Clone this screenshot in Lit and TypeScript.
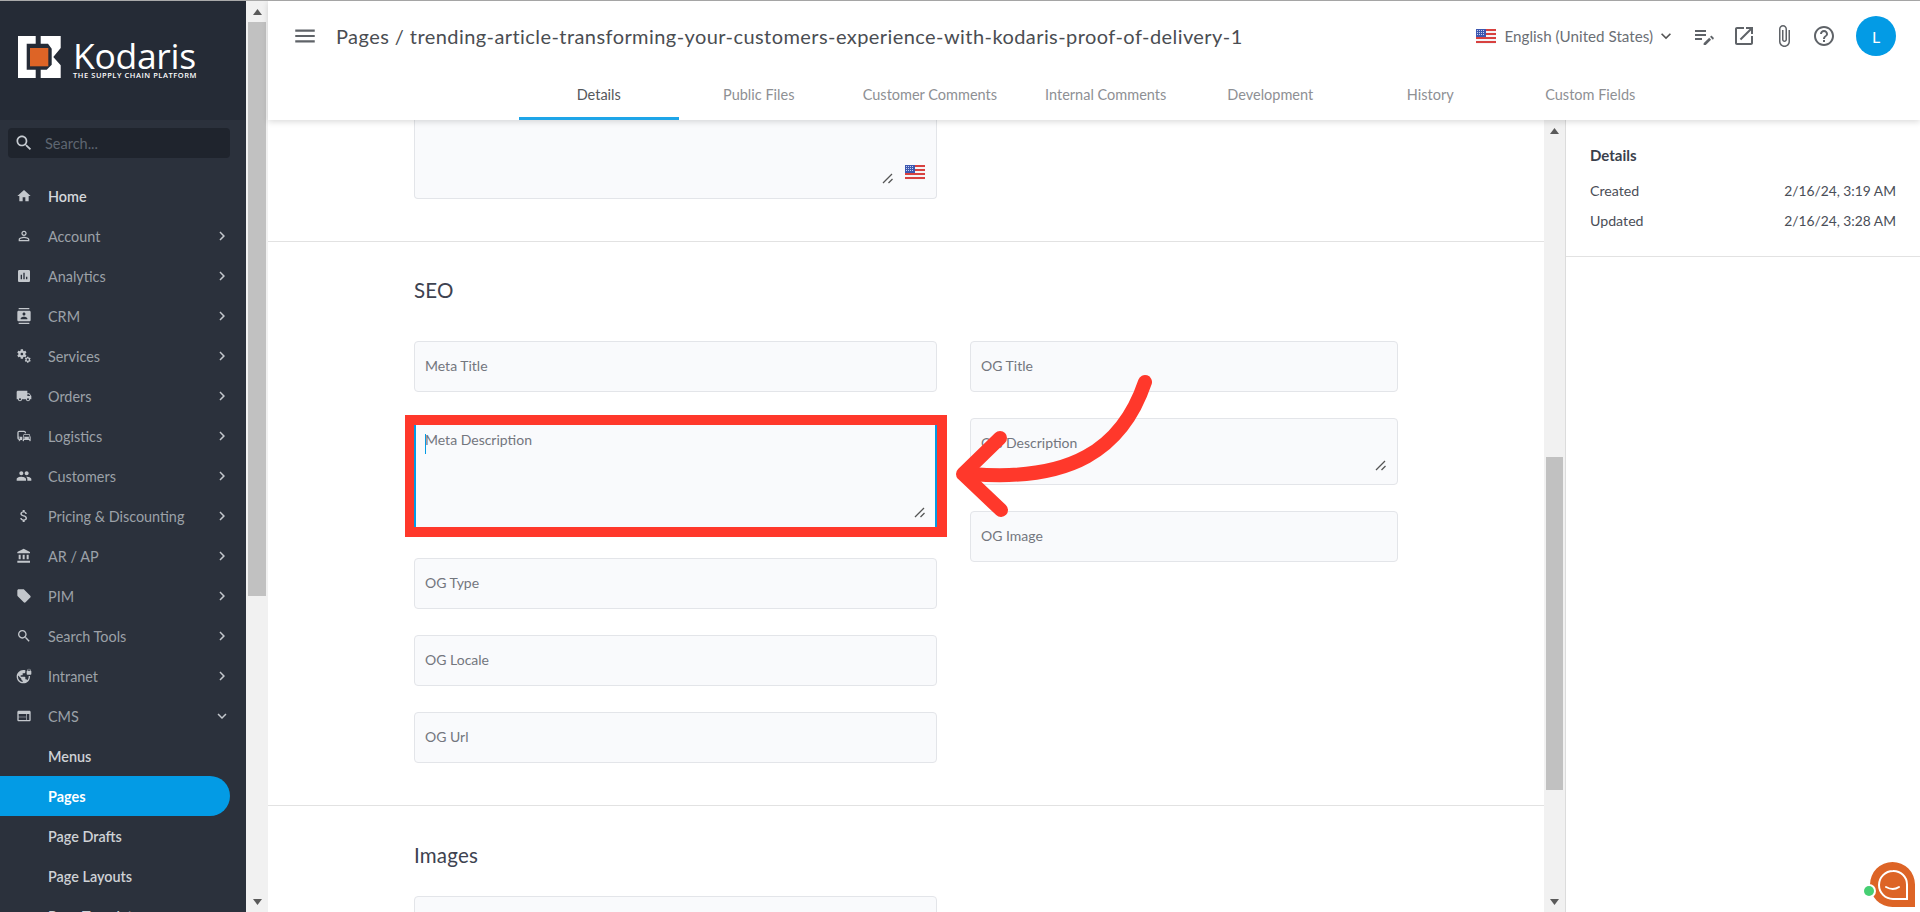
import { LitElement, html, css } from "lit";
import { customElement } from "lit/decorators.js";

const P = {
  home: "M10 20v-6h4v6h5v-8h3L12 3 2 12h3v8z",
  person: "M12 5.9c1.16 0 2.1.94 2.1 2.1s-.94 2.1-2.1 2.1S9.9 9.16 9.9 8s.94-2.1 2.1-2.1m0 9c2.97 0 6.1 1.46 6.1 2.1v1.1H5.9V17c0-.64 3.13-2.1 6.1-2.1M12 4C9.79 4 8 5.79 8 8s1.79 4 4 4 4-1.79 4-4-1.79-4-4-4zm0 9c-2.67 0-8 1.34-8 4v3h16v-3c0-2.66-5.33-4-8-4z",
  analytics: "M19 3H5c-1.1 0-2 .9-2 2v14c0 1.1.9 2 2 2h14c1.1 0 2-.9 2-2V5c0-1.1-.9-2-2-2zM9 17H7v-7h2v7zm4 0h-2V7h2v10zm4 0h-2v-4h2v4z",
  contacts: "M20 0H4v2h16V0zM4 24h16v-2H4v2zM20 4H4c-1.1 0-2 .9-2 2v12c0 1.1.9 2 2 2h16c1.1 0 2-.9 2-2V6c0-1.1-.9-2-2-2zm-8 2.75c1.24 0 2.25 1.01 2.25 2.25s-1.01 2.25-2.25 2.25S9.75 10.24 9.75 9 10.76 6.75 12 6.75zM17 17H7v-1.5c0-1.67 3.33-2.5 5-2.5s5 .83 5 2.5V17z",
  services: "M14.17 13.71l1.4-2.42c.09-.15.05-.34-.08-.45l-1.48-1.16c.03-.22.05-.45.05-.68s-.02-.46-.05-.69l1.48-1.16c.13-.11.17-.3.08-.45l-1.4-2.42c-.09-.15-.27-.21-.43-.15l-1.74.7c-.36-.28-.75-.51-1.18-.69l-.26-1.85C10.53 2.13 10.38 2 10.2 2H7.4c-.18 0-.33.13-.35.3l-.26 1.85c-.43.18-.82.41-1.18.69l-1.74-.7c-.16-.06-.34 0-.43.15l-1.4 2.42c-.09.15-.05.34.08.45l1.48 1.16c-.03.23-.05.46-.05.69 0 .23.02.46.05.69l-1.48 1.16c-.13.11-.17.3-.08.45l1.4 2.42c.09.15.27.21.43.15l1.74-.7c.36.28.75.51 1.18.69l.26 1.85c.02.17.17.3.35.3h2.8c.18 0 .33-.13.35-.3l.26-1.85c.43-.18.82-.41 1.18-.69l1.74.7c.16.06.34 0 .43-.15zM8.8 11c-1.1 0-2-.9-2-2s.9-2 2-2 2 .9 2 2-.9 2-2 2zM21.92 18.67l-.96-.74c.02-.14.04-.29.04-.44s-.01-.3-.04-.44l.95-.74c.08-.07.11-.19.05-.29l-.9-1.55c-.05-.1-.17-.13-.28-.1l-1.11.45c-.23-.18-.48-.33-.76-.44l-.17-1.18c-.01-.12-.11-.2-.21-.2h-1.79c-.11 0-.21.08-.22.19l-.17 1.18c-.27.12-.53.26-.76.44l-1.11-.45c-.1-.04-.22 0-.28.1l-.9 1.55c-.05.1-.04.22.05.29l.95.74c-.02.14-.03.29-.03.44s.01.3.03.44l-.95.74c-.08.07-.11.19-.05.29l.9 1.55c.05.1.17.13.28.1l1.11-.45c.23.18.48.33.76.44l.17 1.18c.02.11.11.19.22.19h1.79c.11 0 .21-.08.22-.19l.17-1.18c.27-.12.53-.26.75-.44l1.12.45c.1.04.22 0 .28-.1l.9-1.55c.06-.09.03-.21-.05-.28zm-4.29.4c-.88 0-1.58-.71-1.58-1.58s.71-1.58 1.58-1.58 1.58.71 1.58 1.58-.7 1.58-1.58 1.58z",
  truck: "M20 8h-3V4H3c-1.1 0-2 .9-2 2v11h2c0 1.66 1.34 3 3 3s3-1.34 3-3h6c0 1.66 1.34 3 3 3s3-1.34 3-3h2v-5l-3-4zM6 18.5c-.83 0-1.5-.67-1.5-1.5s.67-1.5 1.5-1.5 1.5.67 1.5 1.5-.67 1.5-1.5 1.5zm13.5-9l1.96 2.5H17V9.5h2.5zm-1.5 9c-.83 0-1.5-.67-1.5-1.5s.67-1.5 1.5-1.5 1.5.67 1.5 1.5-.67 1.5-1.5 1.5z",
  commute: "M12 4H5C3.34 4 2 5.34 2 7v8c0 1.66 1.34 3 3 3l-1 1v1h1l2-2.03L9 18v-5H4V5.98L13 6v2h2V7c0-1.66-1.34-3-3-3zM5 14c.55 0 1 .45 1 1s-.45 1-1 1-1-.45-1-1 .45-1 1-1zm15.57-4.34c-.14-.4-.52-.66-.97-.66h-7.19c-.46 0-.83.26-.98.66L10 13.77l.01 5.51c0 .38.31.72.69.72h.62c.38 0 .68-.38.68-.76V18h8v1.24c0 .38.31.76.69.76h.61c.38 0 .69-.34.69-.72l.01-1.37v-4.14l-1.43-4.11zm-8.16.34h7.19l1.03 3h-9.25l1.03-3zM12 16c-.55 0-1-.45-1-1s.45-1 1-1 1 .45 1 1-.45 1-1 1zm8 0c-.55 0-1-.45-1-1s.45-1 1-1 1 .45 1 1-.45 1-1 1z",
  people: "M16 11c1.66 0 2.99-1.34 2.99-3S17.66 5 16 5c-1.66 0-3 1.34-3 3s1.34 3 3 3zm-8 0c1.66 0 2.99-1.34 2.99-3S9.66 5 8 5C6.34 5 5 6.34 5 8s1.34 3 3 3zm0 2c-2.33 0-7 1.17-7 3.5V19h14v-2.5c0-2.33-4.67-3.5-7-3.5zm8 0c-.29 0-.62.02-.97.05 1.16.84 1.97 1.97 1.97 3.45V19h6v-2.5c0-2.33-4.67-3.5-7-3.5z",
  money: "M11.8 10.9c-2.27-.59-3-1.2-3-2.15 0-1.09 1.01-1.85 2.7-1.85 1.78 0 2.44.85 2.5 2.1h2.21c-.07-1.72-1.12-3.3-3.21-3.81V3h-3v2.16c-1.94.42-3.5 1.68-3.5 3.61 0 2.31 1.91 3.46 4.7 4.13 2.5.6 3 1.48 3 2.41 0 .69-.49 1.79-2.7 1.79-2.06 0-2.87-.92-2.98-2.1h-2.2c.12 2.19 1.76 3.42 3.68 3.83V21h3v-2.15c1.95-.37 3.5-1.5 3.5-3.55 0-2.84-2.43-3.81-4.7-4.4z",
  bank: "M4 10v7h3v-7H4zm6 0v7h3v-7h-3zM2 22h19v-3H2v3zm14-12v7h3v-7h-3zm-4.5-9L2 6v2h19V6l-9.5-5z",
  tag: "M21.41 11.58l-9-9C12.05 2.22 11.55 2 11 2H4c-1.1 0-2 .9-2 2v7c0 .55.22 1.05.59 1.42l9 9c.36.36.86.58 1.41.58.55 0 1.05-.22 1.41-.59l7-7c.37-.36.59-.86.59-1.41 0-.55-.23-1.06-.59-1.42z",
  search: "M15.5 14h-.79l-.28-.27C15.41 12.59 16 11.11 16 9.5 16 5.91 13.09 3 9.5 3S3 5.91 3 9.5 5.91 16 9.5 16c1.61 0 3.09-.59 4.23-1.57l.27.28v.79l5 4.99L20.49 19l-4.99-5zm-6 0C7.01 14 5 11.99 5 9.5S7.01 5 9.5 5 14 7.01 14 9.5 11.99 14 9.5 14z",
  vpn: "M22 4v-.5C22 2.12 20.88 1 19.5 1S17 2.12 17 3.5V4c-.55 0-1 .45-1 1v4c0 .55.45 1 1 1h5c.55 0 1-.45 1-1V5c0-.55-.45-1-1-1zm-.8 0h-3.4v-.5c0-.94.76-1.7 1.7-1.7s1.7.76 1.7 1.7V4zm-2.28 8c.04.33.08.66.08 1 0 2.08-.8 3.97-2.1 5.39-.26-.81-1-1.39-1.9-1.39h-1v-3c0-.55-.45-1-1-1H7v-2h2c.55 0 1-.45 1-1V8h2c1.1 0 2-.9 2-2V3.46c-.95-.3-1.95-.46-3-.46C5.48 3 1 7.48 1 13s4.48 10 10 10 10-4.48 10-10c0-.34-.02-.67-.05-1h-2.03zM10 20.93c-3.95-.49-7-3.85-7-7.93 0-.62.08-1.21.21-1.79L8 16v1c0 1.1.9 2 2 2v1.93z",
  web: "M20 4H4c-1.1 0-1.99.9-1.99 2L2 18c0 1.1.9 2 2 2h16c1.1 0 2-.9 2-2V6c0-1.1-.9-2-2-2zm-5 14H4v-4h11v4zm0-5H4V9h11v4zm5 5h-4V9h4v9z",
  right: "M10 6L8.59 7.41 13.17 12l-4.58 4.59L10 18l6-6z",
  down: "M16.59 8.59L12 13.17 7.41 8.59 6 10l6 6 6-6z",
  menu: "M3 18h18v-2H3v2zm0-5h18v-2H3v2zm0-7v2h18V6H3z",
  editNote: "M3 10h11v2H3v-2zm0-2h11V6H3v2zm0 8h7v-2H3v2zm15.01-3.13.71-.71c.39-.39 1.02-.39 1.41 0l1.41 1.41c.39.39.39 1.02 0 1.41l-.71.71-2.82-2.82zm-1.06 1.06l-5.3 5.3V21h2.12l5.3-5.3-2.12-2.12z",
  open: "M19 19H5V5h7V3H5c-1.11 0-2 .9-2 2v14c0 1.1.89 2 2 2h14c1.1 0 2-.9 2-2v-7h-2v7zM14 3v2h3.59l-9.83 9.83 1.41 1.41L19 6.41V10h2V3h-7z",
  attach: "M16.5 6v11.5c0 2.21-1.79 4-4 4s-4-1.79-4-4V5c0-1.38 1.12-2.5 2.5-2.5s2.5 1.12 2.5 2.5v10.5c0 .55-.45 1-1 1s-1-.45-1-1V6H10v9.5c0 1.38 1.12 2.5 2.5 2.5s2.5-1.12 2.5-2.5V5c0-2.21-1.79-4-4-4S7 2.79 7 5v12.5c0 3.04 2.46 5.5 5.5 5.5s5.5-2.46 5.5-5.5V6h-1.5z",
  help: "M11 18h2v-2h-2v2zm1-16C6.48 2 2 6.48 2 12s4.48 10 10 10 10-4.48 10-10S17.52 2 12 2zm0 18c-4.41 0-8-3.59-8-8s3.59-8 8-8 8 3.59 8 8-3.59 8-8 8zm0-14c-2.21 0-4 1.79-4 4h2c0-1.1.9-2 2-2s2 .9 2 2c0 2-3 1.75-3 5h2c0-2.25 3-2.5 3-5 0-2.21-1.79-4-4-4z",
};

const NAV: [string, string, string][] = [
  ["Home", P.home, "top"],
  ["Account", P.person, "more"],
  ["Analytics", P.analytics, "more"],
  ["CRM", P.contacts, "more"],
  ["Services", P.services, "more"],
  ["Orders", P.truck, "more"],
  ["Logistics", P.commute, "more"],
  ["Customers", P.people, "more"],
  ["Pricing & Discounting", P.money, "more"],
  ["AR / AP", P.bank, "more"],
  ["PIM", P.tag, "more"],
  ["Search Tools", P.search, "more"],
  ["Intranet", P.vpn, "more"],
  ["CMS", P.web, "open"],
];
const SUB = ["Menus", "Pages", "Page Drafts", "Page Layouts", "Page Templates"];
const TABS = ["Details", "Public Files", "Customer Comments", "Internal Comments", "Development", "History", "Custom Fields"];

const icon = (d: string, cls = "") => html`<svg class=${cls} viewBox="0 0 24 24" fill="currentColor"><path d=${d}></path></svg>`;
const flag = () => html`<svg class="flag" viewBox="0 0 20 15">
  <rect width="20" height="15" rx="1" fill="#f4f4f6"></rect>
  <path d="M0 1h20M0 5h20M0 9h20M0 13h20" stroke="#d8413f" stroke-width="2"></path>
  <rect width="10" height="8" fill="#3d58b0"></rect>
  <path d="M1 1.5h8M1 3.5h8M1 5.5h8" stroke="#c6cfee" stroke-width="1" stroke-dasharray="1 1"></path>
</svg>`;
const grip = () => html`<svg class="grip" viewBox="0 0 12 12"><path d="M1 11L10 2M6.5 11L10.500 7" stroke="#555" stroke-width="1.3" fill="none"></path></svg>`;

@customElement("app-root")
export class AppRoot extends LitElement {
  static styles = css`
    :host { display: block; width: 1920px; height: 912px; overflow: hidden; position: relative; font-family: Lato, "Noto Sans", sans-serif; background: #fff; }
    * { box-sizing: border-box; }
    .root { display: flex; height: 912px; border-top: 1px solid #aaa; }
    svg { display: block; flex: none; }

    .side { width: 246px; flex: none; height: 100%; background: #2b313c; overflow: hidden; color: #9ca1a8; }
    .brand { height: 119px; background: #252b36; display: flex; align-items: flex-start; padding: 35px 0 0 18px; gap: 12px; }
    .logo { width: 43px; height: 42px; }
    .word { display: flex; flex-direction: column; color: #fff; padding-top: 4px; }
    .word b { font: 500 35.500px/31px "Open Sans", sans-serif; letter-spacing: -0.3px; }
    .word i { font: 600 7.500px/9px "Open Sans", sans-serif; letter-spacing: 0.55px; white-space: nowrap; font-style: normal; }
    .find { margin: 8px 16px 18px 8px; height: 30px; background: #1f242d; border-radius: 4px; display: flex; align-items: center; padding-left: 6px; gap: 11px; color: #5e6671; font-size: 14.5px; }
    .find svg { width: 20px; height: 20px; color: #c6cbd1; }
    .item { height: 40px; display: flex; align-items: center; font-size: 14.4px; position: relative; padding-left: 16px; }
    .item .ic { width: 16px; height: 16px; color: #c3c7cc; margin-right: 16px; }
    .item .label { flex: 1; }
    .item .chev { width: 18px; height: 18px; margin-right: 15px; color: #c3c7cc; }
    .item.top { color: #d4d7db; font-weight: 600; }
    .sub { height: 40px; display: flex; align-items: center; padding-left: 48px; font-size: 14.4px; font-weight: 600; color: #cfd2d6; margin-right: 16px; }
    .sub.on { background: #039be5; color: #fff; border-radius: 0 20px 20px 0; font-weight: 700; }

    .track { width: 22px; flex: none; height: 100%; background: #f1f1f1; display: flex; flex-direction: column; align-items: center; position: relative; }
    .arrow { height: 21px; flex: none; display: flex; align-items: center; justify-content: center; color: #5a5a5a; }
    .arrow svg { width: 9px; height: 6px; }
    .thumb { background: #c1c1c1; width: 18px; }
    .gap { flex: 1; }
    .t1 { height: 574px; }
    .main { flex: 1; min-width: 0; display: flex; flex-direction: column; height: 100%; }
    .head { height: 119px; flex: none; background: #fff; box-shadow: 0 2px 6px rgba(0,0,0,.14); position: relative; z-index: 2; display: flex; flex-direction: column; }
    .bar { height: 72px; display: flex; align-items: center; padding: 0 24px 2px 24px; color: #5f6368; }
    .bar .burger { width: 26px; height: 26px; margin-right: 18px; color: #5f6368; }
    .title { flex: 1; font-size: 20px; letter-spacing: 0.43px; color: #4a4d52; white-space: nowrap; }
    .lang { display: flex; align-items: center; font-size: 15.2px; color: #6b6f75; margin-right: 16px; }
    .flag { width: 20px; height: 15px; }
    .lang .flag { margin-right: 8px; }
    .lang svg:last-child { width: 20px; height: 20px; margin-left: 3px; color: #555; }
    .tool { width: 24px; height: 24px; margin-right: 16px; color: #5f6368; }
    .avatar { width: 40px; height: 40px; border-radius: 50%; background: #039be5; color: #fff; display: flex; align-items: center; justify-content: center; font-size: 16px; margin-left: 4px; }
    .tabs { height: 47px; display: flex; justify-content: center; margin-left: 1px; }
    .tab { min-width: 160px; padding: 0 24px 2px; display: flex; align-items: center; justify-content: center; font-size: 14.5px; color: #8e9094; border-bottom: 3px solid transparent; }
    .tab.on { color: #55585c; border-bottom-color: #1ea5e8; }

    .body { flex: 1; min-height: 0; display: flex; }
    .content { flex: 1; min-width: 0; overflow: hidden; }
    .sec { padding-left: 146px; border-bottom: 1px solid #e2e2e2; }
    .s0 { height: 122px; }
    .s1 { height: 564px; padding-top: 35px; }
    .s2 { padding-top: 36px; border-bottom: 0; }
    h2 { margin: 0; font-size: 20.5px; font-weight: 400; letter-spacing: 0.2px; color: #3d4250; line-height: 26px; }
    .cols { display: flex; gap: 33px; margin-top: 38px; }
    .col { display: flex; flex-direction: column; gap: 26px; }
    .c1 { width: 523px; }
    .c2 { width: 428px; }
    .field { height: 51px; flex: none; background: #f9fafc; border: 1px solid #e3e5e9; border-radius: 4px; padding: 12px 10px 0; font-size: 14px; line-height: 24px; color: #73767e; position: relative; }
    .field.big { height: 114px; border-color: #039be5; border-width: 1px 2px; padding: 9px 9px 0; }
    .field.mid { height: 67px; padding-top: 12px; }
    .field.t { height: 79px; border-top: 0; border-radius: 0 0 4px 4px; width: 523px; }
    .caret { position: absolute; left: 9px; top: 15px; width: 1px; height: 20px; background: #039be5; }
    .grip { position: absolute; width: 12px; height: 12px; }
    .field.t .grip { right: 42px; bottom: 14px; }
    .field.t .flag { position: absolute; right: 11px; bottom: 18px; }
    .field.big .grip { right: 9px; bottom: 13px; }
    .field.mid .grip { right: 10px; bottom: 13px; }
    .field.tail { margin-top: 28px; }

    .panel { width: 354px; flex: none; }
    .pbox { height: 137px; padding: 23px 24px 0 24px; border-bottom: 1px solid #e2e2e2; font-size: 14.2px; color: #4a4e57; }
    .pbox h3 { margin: 0 0 8px; font-size: 15px; font-weight: 700; color: #3a3f4c; line-height: 24px; }
    .row { display: flex; justify-content: space-between; height: 30px; align-items: center; }
    .row span:last-child { font-size: 13.8px; }
    .mtrack { border-right: 1px solid #dcdcdc; }
    .mgap { height: 316px; flex: none; }
    .t2 { height: 333px; flex: none; width: 17px; }

    .box { position: absolute; left: 405px; top: 415px; width: 542px; height: 122px; border: 10px solid #ff382b; border-left-width: 9px; pointer-events: none; }
    .over { position: absolute; left: 0; top: 0; width: 1920px; height: 912px; pointer-events: none; z-index: 5; }
  `;

  render() {
    const tri = (up: boolean) => html`<div class="arrow"><svg viewBox="0 0 9 6"><path d=${up ? "M4.500 0L9 6H0z" : "M0 0h9L4.500 6z"} fill="currentColor"></path></svg></div>`;
    const L = ["Meta Title", "Meta Description", "OG Type", "OG Locale", "OG Url"];
    return html`
      <div class="root">
        <aside class="side">
          <div class="brand">
            <svg class="logo" viewBox="0 0 43 42">
              <path d="M0 0H17.700V7.700H8.700V33.700H17.700V42H0z" fill="#fff"></path>
              <path d="M22.700 0H42.700V12L35.300 21L42.700 29.300V42H22.700V33.700H28.700L33.700 28.700V12.700L30 7.700H22.700z" fill="#fff"></path>
              <rect x="12" y="12" width="18.300" height="18.300" fill="#dd6426"></rect>
            </svg>
            <div class="word"><b>Kodaris</b><i>THE SUPPLY CHAIN PLATFORM</i></div>
          </div>
          <div class="find">${icon(P.search)}<span>Search...</span></div>
          ${NAV.map(([n, d, k]) => html`<div class="item ${k}">${icon(d, "ic")}<span class="label">${n}</span>${k === "top" ? "" : icon(k === "open" ? P.down : P.right, "chev")}</div>`)}
          ${SUB.map((s) => html`<div class="sub ${s === "Pages" ? "on" : ""}">${s}</div>`)}
        </aside>
        <div class="track">${tri(true)}<div class="thumb t1"></div><div class="gap"></div>${tri(false)}</div>
        <div class="main">
          <header class="head">
            <div class="bar">
              ${icon(P.menu, "burger")}
              <div class="title">Pages / trending-article-transforming-your-customers-experience-with-kodaris-proof-of-delivery-1</div>
              <div class="lang">${flag()}<span>English (United States)</span>${icon(P.down)}</div>
              ${icon(P.editNote, "tool")}${icon(P.open, "tool")}${icon(P.attach, "tool")}${icon(P.help, "tool")}
              <div class="avatar">L</div>
            </div>
            <nav class="tabs">${TABS.map((t, i) => html`<div class="tab ${i === 0 ? "on" : ""}">${t}</div>`)}</nav>
          </header>
          <div class="body">
            <div class="content">
              <section class="sec s0"><div class="field t">${grip()}${flag()}</div></section>
              <section class="sec s1">
                <h2>SEO</h2>
                <div class="cols">
                  <div class="col c1">
                    ${L.map((l) => html`<div class="field ${l === "Meta Description" ? "big" : ""}">${l === "Meta Description" ? html`<span class="caret"></span>${grip()}` : ""}${l}</div>`)}
                  </div>
                  <div class="col c2">
                    <div class="field">OG Title</div>
                    <div class="field mid">OG Description${grip()}</div>
                    <div class="field">OG Image</div>
                  </div>
                </div>
              </section>
              <section class="sec s2">
                <h2>Images</h2>
                <div class="field tail c1"></div>
              </section>
            </div>
            <div class="track mtrack">${tri(true)}<div class="mgap"></div><div class="thumb t2"></div><div class="gap"></div>${tri(false)}</div>
            <aside class="panel">
              <div class="pbox">
                <h3>Details</h3>
                <div class="row"><span>Created</span><span>2/16/24, 3:19 AM</span></div>
                <div class="row"><span>Updated</span><span>2/16/24, 3:28 AM</span></div>
              </div>
            </aside>
          </div>
        </div>
      </div>
      <div class="box"></div>
      <svg class="over" viewBox="0 0 1920 912">
        <g fill="none" stroke="#ff382b" stroke-width="14" stroke-linecap="round" stroke-linejoin="round">
          <path d="M1145 382C1122 450 1070 482 972 474"></path>
          <path d="M1000 438L963 474L1001 510"></path>
        </g>
        <path d="M1892.500 862a22.500 22.500 0 0 1 22.500 22.500V907h-22.500a22.500 22.500 0 0 1 0-45z" fill="#dd6426"></path>
        <path d="M1893 871a13.500 13.500 0 0 1 14 13.500V899h-14a14 14 0 0 1 0-28z" fill="#dd6426" stroke="#fff" stroke-width="2"></path>
        <path d="M1886 887q7 4 13 0" fill="none" stroke="#fff" stroke-width="2" stroke-linecap="round"></path>
        <circle cx="1869" cy="891" r="7" fill="#fff"></circle>
        <circle cx="1869" cy="891" r="5" fill="#46cf73"></circle>
      </svg>
    `;
  }
}
